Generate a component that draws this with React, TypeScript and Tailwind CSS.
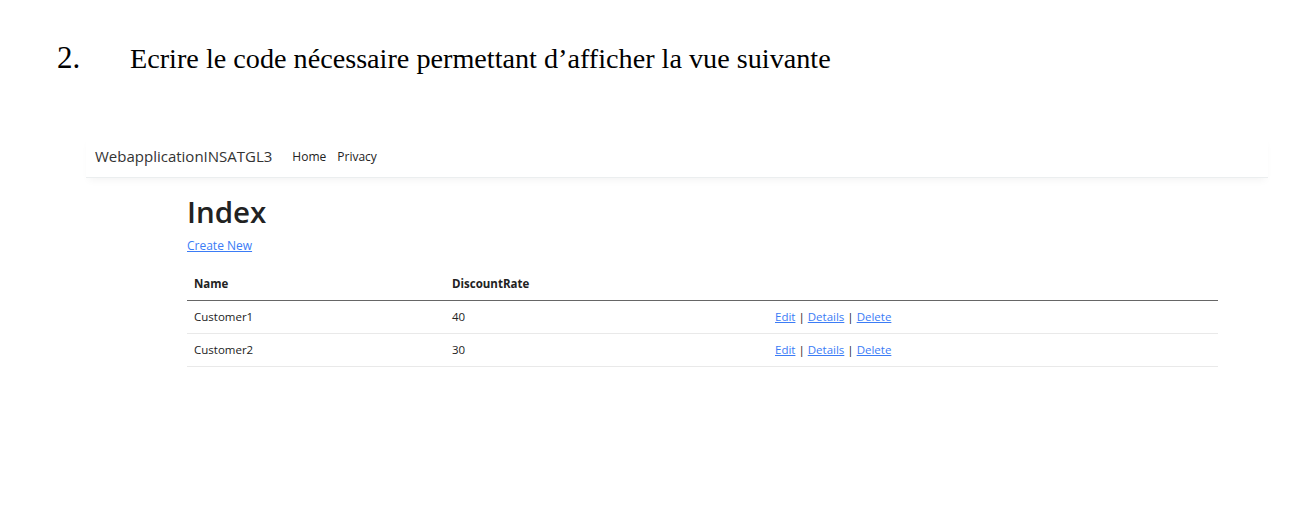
export default function App() {
  const rows = [
    { name: 'Customer1', rate: 40 },
    { name: 'Customer2', rate: 30 },
  ];

  return (
    <div className="w-[1304px] h-[518px] bg-white overflow-hidden">
      <div className="flex items-baseline pt-[38px] pl-[57px] font-['Liberation_Serif',serif] text-black">
        <span className="w-[73px] text-[31px] leading-[40px]">2.</span>
        <span className="text-[28.2px] leading-[40px]">Ecrire le code nécessaire permettant d’afficher la vue suivante</span>
      </div>

      <div className="mt-[57px] ml-[86px] w-[1182px] font-['Open_Sans',sans-serif]">
        <nav className="flex items-center h-[42px] pl-[9px] border-b border-[#ebeeef] shadow-[0_5px_8px_-3px_rgba(0,0,0,0.05)]">
          <span className="text-[15px] text-[#333]">WebapplicationINSATGL3</span>
          <span className="ml-[20px] text-[12px] text-[#222]">Home</span>
          <span className="ml-[11px] text-[12px] text-[#222]">Privacy</span>
        </nav>

        <main className="ml-[101px] w-[1031px] pt-[14px] text-[#222]">
          <h1 className="text-[29.5px] font-semibold leading-[40px]">Index</h1>
          <a className="block mt-[5px] text-[12px] text-[#3b7cf6] underline">Create New</a>

          <table className="w-full mt-[13px] text-[11.5px] border-collapse">
            <thead>
              <tr className="border-b border-[#666]">
                <th className="w-[258px] text-left font-bold px-[7px] h-[32px]">Name</th>
                <th className="w-[323px] text-left font-bold px-[7px]">DiscountRate</th>
                <th></th>
              </tr>
            </thead>
            <tbody>
              {rows.map((r) => (
                <tr key={r.name} className="border-b border-[#e9e9e9]">
                  <td className="px-[7px] h-[33px]">{r.name}</td>
                  <td className="px-[7px]">{r.rate}</td>
                  <td className="px-[7px]">
                    <a className="text-[#3b7cf6] underline">Edit</a> |{' '}
                    <a className="text-[#3b7cf6] underline">Details</a> |{' '}
                    <a className="text-[#3b7cf6] underline">Delete</a>
                  </td>
                </tr>
              ))}
            </tbody>
          </table>
        </main>
      </div>
    </div>
  );
}
